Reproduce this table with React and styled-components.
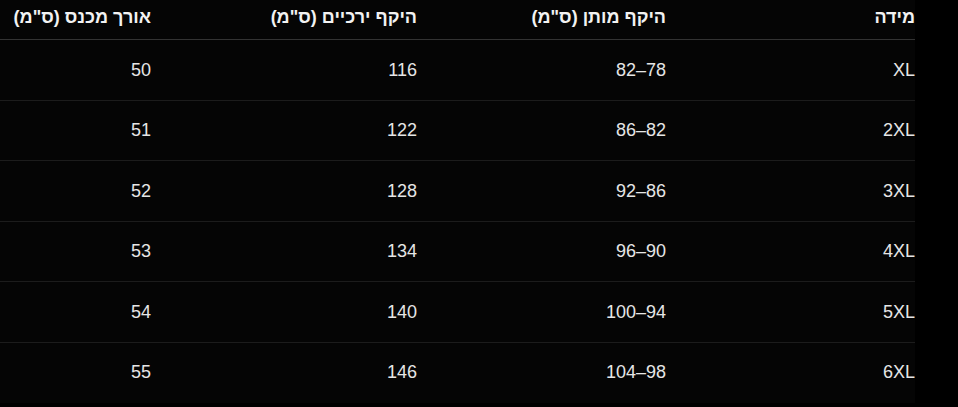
import React from "react";
import styled, { createGlobalStyle } from "styled-components";

const Global = createGlobalStyle`
  html, body { margin: 0; padding: 0; background: #000; }
  body { font-family: "Liberation Sans", "DejaVu Sans", sans-serif; }
`;

const Page = styled.div`
  direction: rtl;
  width: 958px;
  height: 407px;
  background: #000;
  overflow: hidden;
  padding-right: 43px;
  box-sizing: border-box;
`;

const Table = styled.div`
  width: 915px;
  background: #050505;
  display: grid;
  grid-template-columns: 249px 249px 266px 151px;
`;

const HeadCell = styled.div`
  height: 40px;
  box-sizing: border-box;
  padding-bottom: 4px;
  display: flex;
  align-items: center;
  justify-content: flex-start;
  border-bottom: 1px solid #333;
  color: #f2f2f2;
  font-weight: 700;
  font-size: 18px;
  white-space: nowrap;
`;

const Cell = styled.div`
  height: 60.5px;
  box-sizing: border-box;
  display: flex;
  align-items: center;
  justify-content: flex-start;
  border-bottom: 1px solid ${(p) => (p.$last ? "transparent" : "#1c1c1c")};
  color: #e6e6e6;
  font-size: 18px;
  white-space: nowrap;
  padding-top: 1px;
`;

const headers = ["מידה", "היקף מותן (ס\"מ)", "היקף ירכיים (ס\"מ)", "אורך מכנס (ס\"מ)"];
const rows = [
  ["XL", "82–78", "116", "50"],
  ["2XL", "86–82", "122", "51"],
  ["3XL", "92–86", "128", "52"],
  ["4XL", "96–90", "134", "53"],
  ["5XL", "100–94", "140", "54"],
  ["6XL", "104–98", "146", "55"],
];

export default function App() {
  return (
    <>
      <Global />
      <Page>
        <Table>
          {headers.map((h) => (
            <HeadCell key={h}>{h}</HeadCell>
          ))}
          {rows.map((r, i) =>
            r.map((c, j) => (
              <Cell key={i + "-" + j} $last={i === rows.length - 1}>
                <bdi>{c}</bdi>
              </Cell>
            ))
          )}
        </Table>
      </Page>
    </>
  );
}
